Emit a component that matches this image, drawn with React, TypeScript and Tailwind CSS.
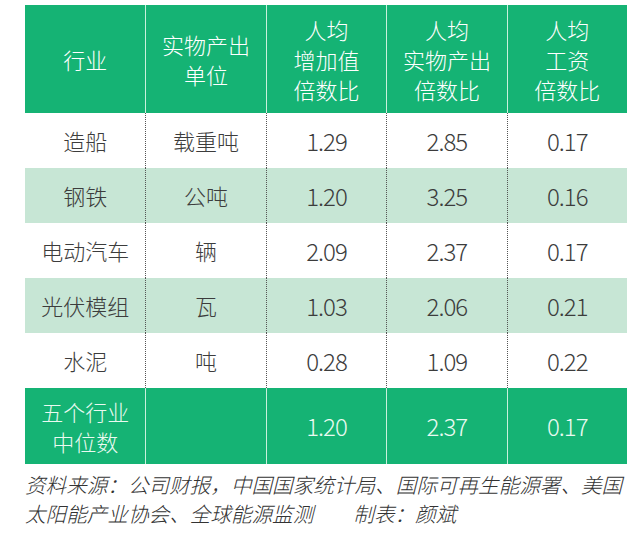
import React, { type FC } from 'react'
import clsx from 'clsx'

const FONT = "font-['Noto_Sans_CJK_SC','Noto_Sans',sans-serif]"

type Row = { name: string; unit: string; a: string; b: string; c: string }

const rows: Row[] = [
  { name: '造船', unit: '载重吨', a: '1.29', b: '2.85', c: '0.17' },
  { name: '钢铁', unit: '公吨', a: '1.20', b: '3.25', c: '0.16' },
  { name: '电动汽车', unit: '辆', a: '2.09', b: '2.37', c: '0.17' },
  { name: '光伏模组', unit: '瓦', a: '1.03', b: '2.06', c: '0.21' },
  { name: '水泥', unit: '吨', a: '0.28', b: '1.09', c: '0.22' },
]

const headers: string[][] = [
  ['行业'],
  ['实物产出', '单位'],
  ['人均', '增加值', '倍数比'],
  ['人均', '实物产出', '倍数比'],
  ['人均', '工资', '倍数比'],
]

const App: FC = () => {
  return (
    <div className={clsx('w-[640px] h-[546px] bg-white pl-[25px] pt-[5px]', FONT)}>
      <div className="w-[602px]">
        {/* header */}
        <div className="grid grid-cols-5 h-[108px] bg-[#15b374] text-white text-[22px] font-light leading-[30px]">
          {headers.map((lines, i) => (
            <div
              key={i}
              className={clsx(
                'flex flex-col items-center justify-center',
                i > 0 && 'border-l border-[#c9f0dc]'
              )}
            >
              {lines.map((l) => (
                <span key={l}>{l}</span>
              ))}
            </div>
          ))}
        </div>

        {/* body */}
        {rows.map((r, idx) => (
          <div
            key={r.name}
            className={clsx(
              'grid grid-cols-5 h-[55px] text-[#3c3c3c] font-light',
              idx % 2 === 1 ? 'bg-[#c7e6d5]' : 'bg-white'
            )}
          >
            <div className="flex items-center justify-center text-[22px]">{r.name}</div>
            <div className="flex items-center justify-center text-[22px] border-l border-dotted border-[#555]">
              {r.unit}
            </div>
            {[r.a, r.b, r.c].map((v, j) => (
              <div
                key={j}
                className="flex items-center justify-center text-[24px] tracking-[-0.04em] border-l border-dotted border-[#555]"
              >
                {v}
              </div>
            ))}
          </div>
        ))}

        {/* median row */}
        <div className="grid grid-cols-5 h-[76px] bg-[#15b374] text-[#eafaf1] font-light">
          <div className="flex flex-col items-center justify-center text-[22px] leading-[30px]">
            <span>五个行业</span>
            <span>中位数</span>
          </div>
          <div className="border-l border-[#c9f0dc]" />
          {['1.20', '2.37', '0.17'].map((v, j) => (
            <div
              key={j}
              className="flex items-center justify-center text-[24px] tracking-[-0.04em] border-l border-[#c9f0dc]"
            >
              {v}
            </div>
          ))}
        </div>

        {/* source */}
        <div className="mt-[6px] text-[20.6px] leading-[29px] italic font-light text-[#333] whitespace-nowrap">
          <div>资料来源：公司财报，中国国家统计局、国际可再生能源署、美国</div>
          <div>
            太阳能产业协会、全球能源监测
            <span className="ml-[40px]">制表：颜斌</span>
          </div>
        </div>
      </div>
    </div>
  )
}

export default App
